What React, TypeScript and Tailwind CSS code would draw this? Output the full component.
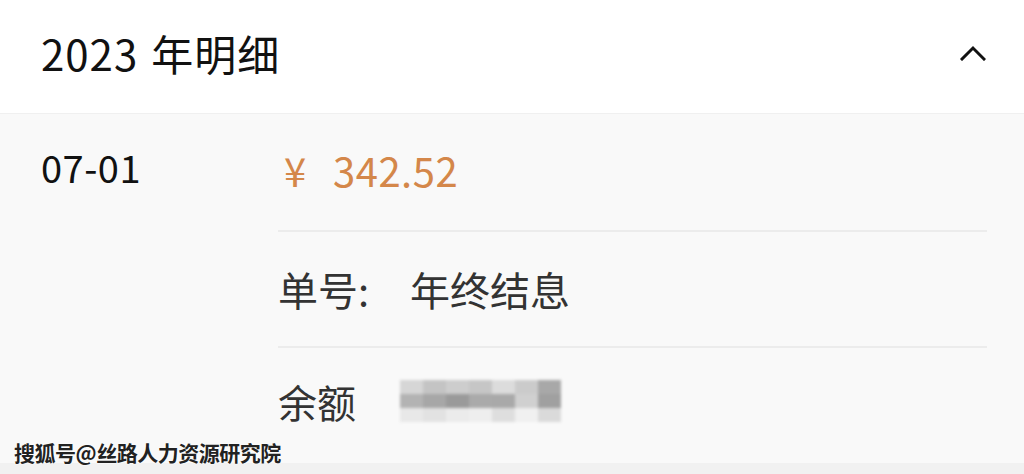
const font = "font-['Noto_Sans_CJK_SC','Noto_Sans',sans-serif]";

function ChevronUp() {
  return (
    <svg width="26" height="16" viewBox="0 0 26 16" fill="none">
      <path d="M2 14 L13 3 L24 14" stroke="#111" strokeWidth="3" strokeLinecap="square" />
    </svg>
  );
}

function Mosaic() {
  const cells = [
    ["#d6d6d6", "#c4c4c4", "#cdcdcd", "#c6c6c6", "#dcdcdc", "#cbcbcb", "#a8a8a8"],
    ["#b3b3b3", "#a7a7a7", "#9a9a9a", "#aaaaaa", "#a9a9a9", "#d0d0d0", "#a0a0a0"],
    ["#e8e8e8", "#e2e2e2", "#ebebeb", "#eeeeee", "#dedede", "#f0f0f0", "#dadada"],
  ];
  return (
    <div className="flex flex-col blur-[1.5px]">
      {cells.map((row, i) => (
        <div key={i} className="flex">
          {row.map((c, j) => (
            <div key={j} className="w-[23px] h-[14px]" style={{ background: c }} />
          ))}
        </div>
      ))}
    </div>
  );
}

export default function App() {
  return (
    <div className={`${font} relative w-[1024px] h-[474px] overflow-hidden bg-[#f9f9f9]`}>
      <div className="h-[113px] bg-white flex items-center justify-between pl-[41px] pr-[38px] pb-[8px]">
        <div className="text-[42px] text-[#111] leading-none tracking-[1px]">
          2023<span className="ml-[13px]">年明细</span>
        </div>
        <ChevronUp />
      </div>

      <div className="flex border-t border-[#f0f0f0]">
        <div className="w-[278px] pl-[41px] pt-[34px] text-[38px] leading-none text-[#111] tracking-[0.5px]">07-01</div>
        <div className="flex-1 mr-[37px] flex flex-col">
          <div className="h-[118px] flex items-center border-b-2 border-[#ececec] pb-[4px] text-[40px] text-[#d4874a] leading-none">
            <span className="ml-[6px] w-[49px]">¥</span>
            <span className="tracking-[0.5px]">342.52</span>
          </div>
          <div className="h-[116px] flex items-center border-b-2 border-[#ececec] text-[40px] text-[#333] leading-none">
            <span className="w-[132px]">单号:</span>
            <span>年终结息</span>
          </div>
          <div className="h-[116px] flex items-center text-[39px] text-[#333] leading-none pb-[10px]">
            <span className="w-[122px]">余额</span>
            <Mosaic />
          </div>
        </div>
      </div>

      <div className="absolute left-0 right-0 bottom-0 h-[11px] bg-[#f1f1f1]" />
      <div className="absolute left-[14px] bottom-[11px] text-[21px] leading-none font-bold text-[#222] tracking-[-0.5px] [text-shadow:0_0_2px_#fff,0_0_2px_#fff]">
        搜狐号@丝路人力资源研究院
      </div>
    </div>
  );
}
